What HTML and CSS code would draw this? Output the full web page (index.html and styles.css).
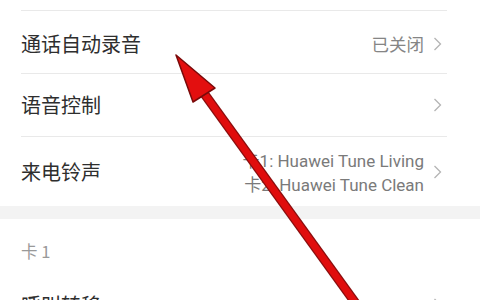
FILE: index.html
```html
<!DOCTYPE html>
<html lang="zh">
<head>
<meta charset="utf-8">
<link rel="stylesheet" href="styles.css">
</head>
<body>
<div class="screen">
  <div class="group">
    <div class="row row-top"></div>
    <div class="row r1">
      <span class="title">通话自动录音</span>
      <span class="value">已关闭</span>
      <svg class="chev" viewBox="0 0 9 14"><path d="M1.5 1 L7.5 7 L1.5 13" fill="none" stroke="#b4b4b4" stroke-width="1.3"/></svg>
    </div>
    <div class="row r2">
      <span class="title">语音控制</span>
      <svg class="chev" viewBox="0 0 9 14"><path d="M1.5 1 L7.5 7 L1.5 13" fill="none" stroke="#b4b4b4" stroke-width="1.3"/></svg>
    </div>
    <div class="row r3 last">
      <span class="title">来电铃声</span>
      <span class="value two">
        <span>卡1: Huawei Tune Living</span>
        <span>卡2: Huawei Tune Clean</span>
      </span>
      <svg class="chev" viewBox="0 0 9 14"><path d="M1.5 1 L7.5 7 L1.5 13" fill="none" stroke="#b4b4b4" stroke-width="1.3"/></svg>
    </div>
  </div>
  <div class="band"></div>
  <div class="group">
    <div class="section">卡 1</div>
    <div class="row r4">
      <span class="title">呼叫转移</span>
      <svg class="chev" viewBox="0 0 9 14"><path d="M1.5 1 L7.5 7 L1.5 13" fill="none" stroke="#b4b4b4" stroke-width="1.3"/></svg>
    </div>
  </div>
  <svg class="arrow" viewBox="0 0 480 300" width="480" height="300">
    <g stroke="#7a0a0a" stroke-width="1.5" stroke-linejoin="round">
      <line x1="203" y1="92" x2="362" y2="312" stroke="#8a0d0d" stroke-width="9.5" stroke-linecap="butt"/>
      <line x1="203" y1="92" x2="362" y2="312" stroke="#e00d0d" stroke-width="7" stroke-linecap="butt"/>
      <polygon points="176,55 215,88 193,102" fill="#e30f0f"/>
    </g>
  </svg>
</div>
</body>
</html>
```

FILE: styles.css
```css
html, body {
  margin: 0;
  padding: 0;
  background: #ffffff;
}
.screen {
  position: relative;
  width: 480px;
  height: 300px;
  overflow: hidden;
  font-family: "Noto Sans CJK SC", "Noto Sans", Roboto, sans-serif;
  background: #ffffff;
}
.group {
  padding: 0 33px 0 21px;
}
.row {
  display: flex;
  align-items: center;
  border-bottom: 1px solid #e9e9e9;
}
.row.last {
  border-bottom: none;
}
.row-top {
  height: 10px;
}
.r1 { padding-top: 3px; box-sizing: border-box; height: 63px; }
.r2 { height: 62px; }
.r3 { height: 69px; }
.r4 { height: 52px; border-bottom: none; }
.title {
  flex: 1;
  font-size: 20px;
  color: #2e2e2e;
  line-height: 1;
}
.value {
  font-size: 17.5px;
  color: #858585;
  margin-right: 9px;
  line-height: 1;
}
.value.two {
  display: flex;
  flex-direction: column;
  align-items: flex-end;
  gap: 7px;
  font-size: 17px;
  font-family: Roboto, "Noto Sans CJK SC", sans-serif;
  color: #7a7a7a;
  padding-top: 3px;
}
.chev {
  width: 9px;
  height: 14px;
  margin-right: 5px;
  flex: none;
}
.band {
  height: 13px;
  background: #f3f3f3;
}
.section {
  height: 60px;
  display: flex;
  align-items: center;
  font-size: 16.5px;
  color: #999999;
  padding-top: 4px;
  box-sizing: border-box;
}
.arrow {
  position: absolute;
  left: 0;
  top: 0;
  pointer-events: none;
}
```
